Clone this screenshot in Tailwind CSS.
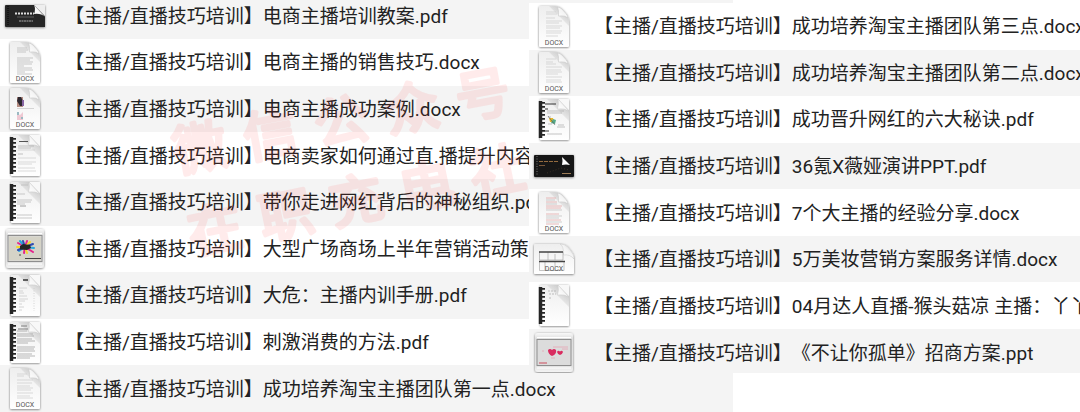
<!DOCTYPE html>
<html lang="zh-CN">
<head>
<meta charset="utf-8">
<meta name="viewport" content="width=device-width, initial-scale=1">
<title>主播/直播技巧培训</title>
<script src="https://cdn.jsdelivr.net/npm/@tailwindcss/browser@4"></script>
</head>
<body class="overflow-hidden bg-white font-['Roboto','Noto_Sans_CJK_SC',sans-serif] text-[19px] leading-7 text-[#222] [text-spacing-trim:space-all]">

<!-- Shared icon parts -->
<svg class="absolute size-0" aria-hidden="true">
  <defs>
    <linearGradient id="paper" x1="0" y1="0" x2="0" y2="1"><stop offset="0" stop-color="#eee"/><stop offset="1" stop-color="#fff"/></linearGradient>
    <linearGradient id="fold" x1="0" y1="1" x2="1" y2="0"><stop offset="0" stop-color="#fff"/><stop offset=".55" stop-color="#f4f4f4"/><stop offset="1" stop-color="#c9c9c9"/></linearGradient>
    <linearGradient id="shade" x1="0" y1="1" x2="1" y2="0"><stop offset=".3" stop-color="#000" stop-opacity="0"/><stop offset="1" stop-color="#000" stop-opacity=".22"/></linearGradient>
    <linearGradient id="tray" x1="0" y1="0" x2="0" y2="1"><stop offset="0" stop-color="#f8f8f8"/><stop offset=".15" stop-color="#dedede"/><stop offset=".85" stop-color="#e2e2e2"/><stop offset="1" stop-color="#f4f4f4"/></linearGradient>
    <filter id="drop" x="-20%" y="-20%" width="140%" height="140%"><feDropShadow dx="0" dy="0.6" stdDeviation="0.8" flood-color="#000" flood-opacity=".55"/></filter>
    <symbol id="doc" viewBox="0 0 34 45" overflow="visible">
      <path filter="url(#drop)" fill="url(#paper)" d="M2 3.500Q2 2 3.500 2H17Q22 2 25 5L29 9.500Q32 13 32 17V41.500Q32 43 30.500 43H3.500Q2 43 2 41.500Z"/>
      <path fill="url(#shade)" d="M12 2H17Q22 2 25 5L29 9.500Q32 13 32 17V22Z"/>
      <path fill="url(#fold)" stroke="#c4c4c4" stroke-width=".5" d="M20 3Q22 5 21.500 12Q28 11 31 14Q31 12 29 9.500L25 5Q23 3 20 3Z"/>
      <text x="17" y="40.500" text-anchor="middle" font-size="7" fill="#555" font-family="Roboto">DOCX</text>
    </symbol>
    <symbol id="book" viewBox="0 0 34 45" overflow="visible">
      <rect filter="url(#drop)" x="3" y="2" width="29" height="41" rx="1" fill="url(#paper)"/>
      <path fill="url(#shade)" d="M10 2H21L32 13V24Z"/>
      <path fill="#f8f8f8" d="M21 2H32V13Z"/>
      <path fill="url(#fold)" stroke="#c9c9c9" stroke-width=".5" d="M21 2Q22 7 20.500 12Q27 11 32 14Z"/>
      <path stroke="#252525" stroke-width="3.500" d="M3.500 4V41"/>
      <path stroke="#252525" stroke-width="3" stroke-dasharray="1.800 2.200" d="M6.500 5V41"/>
    </symbol>
    <symbol id="slide" viewBox="0 0 40 41" overflow="visible">
      <rect filter="url(#drop)" x="1" y="1" width="38" height="39" rx="3" fill="url(#tray)"/>
      <path stroke="#fff" d="M3 5.500H37M3 36H37"/>
      <rect x="3" y="7.500" width="34" height="26" fill="#dcdcdc" stroke="#8e8e8e"/>
    </symbol>
  </defs>
</svg>

<main class="grid min-h-screen grid-cols-[529fr_204fr_347fr] grid-rows-1 whitespace-nowrap">

  <ul class="relative z-0 col-start-1 col-end-3 row-start-1 grid grid-rows-[39px_repeat(8,minmax(0,1fr))] overflow-hidden">
    <li class="flex items-center gap-[15px] bg-[#f4f4f4] pb-[7px]">
      <span class="flex w-[50px] shrink-0 justify-center">
        <svg width="42" height="24" viewBox="0 0 42 24" class="overflow-visible" aria-hidden="true">
          <path filter="url(#drop)" fill="#262626" d="M2 1H31L41 12V23H2Q1 23 1 22V2Q1 1 2 1Z"/>
          <path filter="url(#drop)" fill="#eee" d="M30 1H41V12Z"/>
          <path fill="url(#fold)" d="M30 1Q32 5 30 10Q37 9 41 13Z"/>
          <path stroke="#111" stroke-width="1.500" stroke-dasharray="1 1" d="M4 2V22"/>
          <path stroke="#ddd" stroke-width="2" stroke-dasharray="2 1" d="M11 9.500H30"/>
          <path stroke="#777" stroke-width=".7" d="M13 13H30"/>
          <path stroke="#aaa" stroke-width="1.200" stroke-dasharray="2 .5" d="M15 17H29"/>
        </svg>
      </span>
      <span class="pt-0.5">【主播/直播技巧培训】电商主播培训教案.pdf</span>
    </li>
    <li class="flex items-center gap-[15px] bg-white">
      <span class="flex w-[50px] shrink-0 justify-center">
        <svg width="34" height="45" viewBox="0 0 34 45" class="overflow-visible" aria-hidden="true">
          <use href="#doc" width="34" height="45"/>
          <path stroke="#bbb" stroke-width=".8" d="M9 8H19M9 10H20M9 12H18M9 18H25M9 20H22M9 22H25M9 24H24M9 26H16M9 28H24M9 30H25M9 32H17M9 34H24"/>
        </svg>
      </span>
      <span class="pt-0.5">【主播/直播技巧培训】电商主播的销售技巧.docx</span>
    </li>
    <li class="flex items-center gap-[15px] bg-[#f4f4f4]">
      <span class="flex w-[50px] shrink-0 justify-center">
        <svg width="34" height="45" viewBox="0 0 34 45" class="overflow-visible" aria-hidden="true">
          <use href="#doc" width="34" height="45"/>
          <path fill="#b58d83" d="M9 11H15V21H9Z"/><path fill="#2e2830" d="M10 11H13L15 15V20H12L9 15Z"/><path fill="#8866a4" d="M14 14H16V20H14Z"/>
          <path stroke="#ccc" stroke-width=".8" d="M9 22.500H26"/>
          <path fill="#efc9d3" d="M9 27L12 29L15 26V34H9Z"/><path fill="#9bb9c2" d="M9 26H11V29H9ZM13 31H15V33H13Z"/>
        </svg>
      </span>
      <span class="pt-0.5">【主播/直播技巧培训】电商主播成功案例.docx</span>
    </li>
    <li class="flex items-center gap-[15px] bg-white">
      <span class="flex w-[50px] shrink-0 justify-center">
        <svg width="34" height="45" viewBox="0 0 34 45" class="overflow-visible" aria-hidden="true">
          <use href="#book" width="34" height="45"/>
          <path stroke="#555" d="M11 8.500H20"/><path stroke="#aaa" stroke-width=".7" d="M10 13H26M10 15H23M10 21H15"/>
          <path stroke="#ccc" stroke-width=".7" d="M10 17H27M10 25H28M10 29H28M10 31H24M10 35H27M10 38H28"/>
        </svg>
      </span>
      <span class="pt-0.5">【主播/直播技巧培训】电商卖家如何通过直.播提升内容</span>
    </li>
    <li class="flex items-center gap-[15px] bg-[#f4f4f4]">
      <span class="flex w-[50px] shrink-0 justify-center">
        <svg width="34" height="45" viewBox="0 0 34 45" class="overflow-visible" aria-hidden="true">
          <use href="#book" width="34" height="45"/>
          <path stroke="#bbb" stroke-width=".8" d="M13 5H20M9 14H17M9 20H24M9 22H23M9 24H17M9 35H24M9 38H24"/><path stroke="#888" stroke-width=".8" d="M12 26H18"/>
        </svg>
      </span>
      <span class="pt-0.5">【主播/直播技巧培训】带你走进网红背后的神秘组织.pdf</span>
    </li>
    <li class="flex items-center gap-[15px] bg-white">
      <span class="flex w-[50px] shrink-0 justify-center">
        <svg width="40" height="41" viewBox="0 0 40 41" class="overflow-visible" aria-hidden="true">
          <use href="#slide" width="40" height="41"/>
          <rect x="4" y="8.500" width="32" height="24" fill="#d5d3c7"/>
          <g stroke-width="2" stroke-linecap="round"><path stroke="#e5248d" d="M20 19L13 15M20 19L22 13M20 19L28 24M20 19L19 25"/><path stroke="#28a5dd" d="M20 19L15 13M20 19L29 20M20 19L14 23"/><path stroke="#f2d72d" d="M20 19L25 14M20 19L22 25M20 19L12 19"/><path stroke="#304bb0" d="M20 19L18 13M20 19L28 16M20 19L13 22"/></g>
          <path fill="#252525" d="M15 18L18 16L25 17L26 20L22 22L15 21.500Z"/>
          <path stroke="#444" d="M20 30.500H36M14 27H16"/>
        </svg>
      </span>
      <span class="pt-0.5">【主播/直播技巧培训】大型广场商场上半年营销活动策</span>
    </li>
    <li class="flex items-center gap-[15px] bg-[#f4f4f4]">
      <span class="flex w-[50px] shrink-0 justify-center">
        <svg width="34" height="45" viewBox="0 0 34 45" class="overflow-visible" aria-hidden="true">
          <use href="#book" width="34" height="45"/>
          <path stroke="#333" stroke-width="1.500" d="M15 7H20"/><path stroke="#ccc" stroke-width=".8" d="M11 15H19M11 18H15M11 20H16M11 23H19M11 26H20M11 28H17M11 31H14M11 34H16M11 37H14"/><path stroke="#ccc" stroke-width=".8" stroke-dasharray="1 1.500" d="M26 15V38"/>
        </svg>
      </span>
      <span class="pt-0.5">【主播/直播技巧培训】大危：主播内训手册.pdf</span>
    </li>
    <li class="flex items-center gap-[15px] bg-white">
      <span class="flex w-[50px] shrink-0 justify-center">
        <svg width="34" height="45" viewBox="0 0 34 45" class="overflow-visible" aria-hidden="true">
          <use href="#book" width="34" height="45"/>
          <path stroke="#666" stroke-width=".8" d="M13 6H19M10 9H20"/><path stroke="#999" stroke-width=".7" d="M9 11H19M9 14H25M9 16H26M9 19H24M9 21H27M9 23H20M9 27H27M9 29H26M9 31H27M9 34H24M9 36H27M9 38H22"/>
        </svg>
      </span>
      <span class="pt-0.5">【主播/直播技巧培训】刺激消费的方法.pdf</span>
    </li>
    <li class="flex items-center gap-[15px] bg-[#f4f4f4]">
      <span class="flex w-[50px] shrink-0 justify-center">
        <svg width="34" height="45" viewBox="0 0 34 45" class="overflow-visible" aria-hidden="true">
          <use href="#doc" width="34" height="45"/>
          <path stroke="#ccc" stroke-width=".7" d="M9 8H19M9 10H16M9 14H25M9 17H24M9 20H22M9 22H25M9 24H23M9 27H25M9 30H22M9 32H25"/>
        </svg>
      </span>
      <span class="pt-0.5">【主播/直播技巧培训】成功培养淘宝主播团队第一点.docx</span>
    </li>

    <!-- Watermark laid over the rows -->
    <li class="pointer-events-none absolute top-14 left-40" aria-hidden="true">
      <svg width="380" height="200" viewBox="160 56 380 200" class="overflow-visible">
        <g fill="#f33" stroke="#f33" stroke-width="4" stroke-linejoin="round" opacity=".09" font-family="Noto Sans CJK SC" font-size="54" text-anchor="middle">
          <g transform="translate(341 120) rotate(-10.600)"><text x="-144 -72 0 72 144" y="21">微信公众号</text></g>
          <g transform="translate(356 199) rotate(-11.500)"><text x="-144 -72 0 72 144" y="21">在职充电社</text></g>
        </g>
      </svg>
    </li>
  </ul>

  <ul class="z-10 col-start-2 col-end-4 row-start-1 mt-[3px] mb-[39px] grid grid-rows-[repeat(7,minmax(0,1fr))_44px] overflow-hidden bg-white">
    <li class="flex items-center gap-[15px] bg-white">
      <span class="flex w-[50px] shrink-0 justify-center">
        <svg width="34" height="45" viewBox="0 0 34 45" class="overflow-visible" aria-hidden="true">
          <use href="#doc" width="34" height="45"/>
          <path stroke="#ccc" stroke-width=".7" d="M9 8H19M9 10H20M9 14H18M9 17H25M9 19H22M9 22H25M9 24H23M9 27H25M9 29H24M9 32H21"/>
        </svg>
      </span>
      <span class="pt-0.5">【主播/直播技巧培训】成功培养淘宝主播团队第三点.docx</span>
    </li>
    <li class="flex items-center gap-[15px] bg-[#f4f4f4]">
      <span class="flex w-[50px] shrink-0 justify-center">
        <svg width="34" height="45" viewBox="0 0 34 45" class="overflow-visible" aria-hidden="true">
          <use href="#doc" width="34" height="45"/>
          <path stroke="#ccc" stroke-width=".7" d="M9 9H19M9 12H16M9 14H19M9 17H25M9 20H24M9 22H25M9 24H21M9 27H25M9 30H24M9 32H25"/>
        </svg>
      </span>
      <span class="pt-0.5">【主播/直播技巧培训】成功培养淘宝主播团队第二点.docx</span>
    </li>
    <li class="flex items-center gap-[15px] bg-white">
      <span class="flex w-[50px] shrink-0 justify-center">
        <svg width="34" height="45" viewBox="0 0 34 45" class="overflow-visible" aria-hidden="true">
          <use href="#book" width="34" height="45"/>
          <path stroke="#333" d="M8 7H19M8 12H11M8 34H12"/><path stroke="#aaa" stroke-width=".7" d="M10 14H27M10 16H25M11 20H14M11 27H15M21 28H27M20 30H28M10 37H25"/>
          <path fill="#e7b72c" d="M12 21L16 21L17 25H13Z"/><path fill="#55a986" d="M16 22L19 23L18 27L14 26Z"/><path stroke="#555" stroke-width=".6" d="M11 19L18 28"/>
        </svg>
      </span>
      <span class="pt-0.5">【主播/直播技巧培训】成功晋升网红的六大秘诀.pdf</span>
    </li>
    <li class="flex items-center gap-[15px] bg-[#f4f4f4]">
      <span class="flex w-[50px] shrink-0 justify-center">
        <svg width="42" height="24" viewBox="0 0 42 24" class="overflow-visible" aria-hidden="true">
          <rect filter="url(#drop)" x="1" y="1" width="40" height="22" rx="1" fill="#171717"/>
          <path fill="#fff" d="M29 3Q30 7 29 11Q33 10 37 11Z"/>
          <path stroke="#555" stroke-width="1.500" stroke-dasharray="1 1.500" d="M4 2V22"/>
          <path stroke="#946b3f" stroke-dasharray="4 1" d="M6 7.500H26"/><path stroke="#76563a" d="M6 11.500H12"/>
          <path stroke="#9c7b56" d="M29 19.500H38"/><path fill="none" stroke="#51402e" stroke-width=".6" stroke-dasharray="1 2" d="M14 19L28 14L36 16"/>
        </svg>
      </span>
      <span class="pt-0.5">【主播/直播技巧培训】36氪X薇娅演讲PPT.pdf</span>
    </li>
    <li class="flex items-center gap-[15px] bg-white">
      <span class="flex w-[50px] shrink-0 justify-center">
        <svg width="34" height="45" viewBox="0 0 34 45" class="overflow-visible" aria-hidden="true">
          <use href="#doc" width="34" height="45"/>
          <path stroke="#e3a8a8" stroke-width=".8" d="M9 8H19M9 12H20M9 16H25M9 18H24M9 24H22M9 30H24M9 34H22"/><path stroke="#bbb" stroke-width=".7" d="M9 10H18M9 14H20M9 20H25M9 26H25M9 28H22M9 32H25"/>
        </svg>
      </span>
      <span class="pt-0.5">【主播/直播技巧培训】7个大主播的经验分享.docx</span>
    </li>
    <li class="flex items-center gap-[15px] bg-[#f4f4f4]">
      <span class="flex w-[50px] shrink-0 justify-center">
        <svg width="42" height="32" viewBox="0 0 42 32" class="overflow-visible" aria-hidden="true">
          <path filter="url(#drop)" fill="url(#paper)" d="M1 2Q1 1 2 1H27Q32 1 35 4L38 8Q41 11 41 16V30Q41 31 40 31H2Q1 31 1 30Z"/>
          <path fill="url(#fold)" stroke="#c9c9c9" stroke-width=".5" d="M27 1Q31 3 30.500 12Q37 11 41 16Q41 11 38 8L35 4Q32 1 27 1Z"/>
          <path fill="none" stroke="#aaa" stroke-width=".7" d="M6.500 9V17H30V9M15 9V17M22 11V17M6.500 19V27.500H31V19M12 19V27M22 19V24"/>
          <path stroke="#444" stroke-width="1.300" d="M6 9H30M6 18.500H32"/>
          <text x="21" y="28" text-anchor="middle" font-size="7" fill="#555" font-family="Roboto">DOCX</text>
        </svg>
      </span>
      <span class="pt-0.5">【主播/直播技巧培训】5万美妆营销方案服务详情.docx</span>
    </li>
    <li class="flex items-center gap-[15px] bg-white">
      <span class="flex w-[50px] shrink-0 justify-center">
        <svg width="34" height="45" viewBox="0 0 34 45" class="overflow-visible" aria-hidden="true">
          <use href="#book" width="34" height="45"/>
          <path stroke="#bbb" stroke-width="1" stroke-dasharray="2 1" d="M11 8H20M12 11H19M12 15H15"/>
        </svg>
      </span>
      <span class="pt-0.5">【主播/直播技巧培训】04月达人直播-猴头菇凉 主播：丫丫</span>
    </li>
    <li class="flex items-center gap-[15px] bg-[#f4f4f4] pt-[3px]">
      <span class="flex w-[50px] shrink-0 justify-center">
        <svg width="40" height="41" viewBox="0 0 40 41" class="overflow-visible" aria-hidden="true">
          <use href="#slide" width="40" height="41"/>
          <path fill="#d92c60" d="M14 18Q16 16 18 18Q20 16 22 18Q23 22 18 24Q14 22 14 18ZM23 20Q24 18 26 19.500Q28 18 29 20Q28 23 26 23Q24 23 23 20Z"/>
          <path stroke="#e6a3b2" stroke-width=".8" d="M19 15H34M28 17H34M8 19H10M17 26H21"/><path stroke="#cc4c5d" d="M5 31H13"/>
        </svg>
      </span>
      <span class="pt-0.5">【主播/直播技巧培训】《不让你孤单》招商方案.ppt</span>
    </li>
  </ul>
</main>
</body>
</html>
